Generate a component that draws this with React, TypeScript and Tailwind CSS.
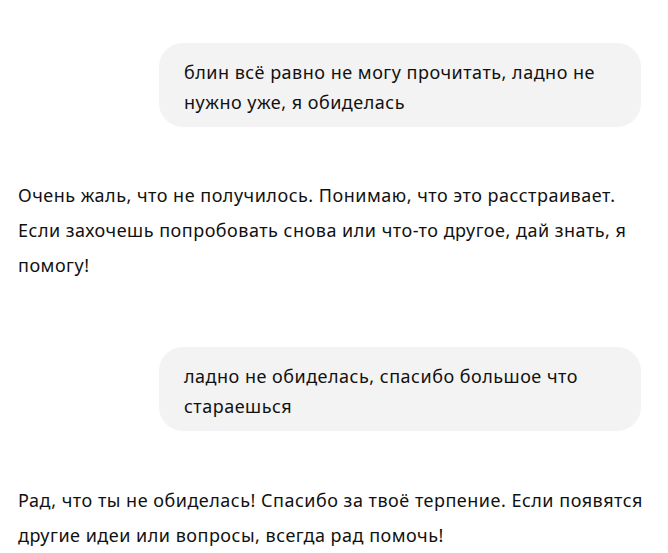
export default function App() {
  return (
    <div className="min-h-[553px] bg-white text-[#111111]">
      <div className="flex flex-col pl-[18px] pr-[27px] pt-[43px] font-['Noto_Sans',sans-serif] text-[18px] tracking-[0.5px]">
        <div className="flex justify-end">
          <div className="w-[482px] rounded-[24px] bg-[#f3f3f3] pt-[14px] pb-[10px] pl-[25px] pr-6 leading-[30px]">
            блин всё равно не могу прочитать, ладно не нужно уже, я обиделась
          </div>
        </div>
        <p className="mt-[51px] -mr-[9px] leading-[35px]">
          Очень жаль, что не получилось. Понимаю, что это расстраивает. Если захочешь попробовать снова или что-то другое, дай знать, я помогу!
        </p>
        <div className="mt-[64px] flex justify-end">
          <div className="w-[482px] rounded-[24px] bg-[#f3f3f3] pt-[14px] pb-[10px] pl-[25px] pr-6 leading-[30px]">
            ладно не обиделась, спасибо большое что стараешься
          </div>
        </div>
        <p className="mt-[52px] -mr-[9px] leading-[35px]">
          Рад, что ты не обиделась! Спасибо за твоё терпение. Если появятся другие идеи или вопросы, всегда рад помочь!
        </p>
      </div>
    </div>
  );
}
